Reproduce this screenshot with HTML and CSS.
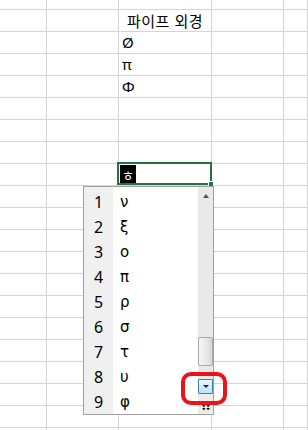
FILE: index.html
```html
<!DOCTYPE html>
<html lang="ko">
<head>
  <meta charset="UTF-8" />
  <meta name="viewport" content="width=device-width, initial-scale=1" />
  <title>파이프 외경</title>
  <link rel="stylesheet" href="styles.css">
</head>
<body>
  <div class="sheet" id="sheet"></div>

  <!-- IME candidate window -->
  <div class="ime">
    <div class="cand-list">
      <div class="cand"><span class="num">1</span><span class="ch">ν</span></div>
      <div class="cand"><span class="num">2</span><span class="ch">ξ</span></div>
      <div class="cand"><span class="num">3</span><span class="ch">ο</span></div>
      <div class="cand"><span class="num">4</span><span class="ch">π</span></div>
      <div class="cand"><span class="num">5</span><span class="ch">ρ</span></div>
      <div class="cand"><span class="num">6</span><span class="ch">σ</span></div>
      <div class="cand"><span class="num">7</span><span class="ch">τ</span></div>
      <div class="cand"><span class="num">8</span><span class="ch">υ</span></div>
      <div class="cand"><span class="num">9</span><span class="ch">φ</span></div>
    </div>
    <div class="scroll">
      <div class="sb-up"><span class="tri-up"></span></div>
      <div class="sb-space top"></div>
      <div class="sb-thumb"></div>
      <div class="sb-space bottom"></div>
      <div class="sb-down"><span class="tri-down"></span></div>
      <div class="sb-more">
        <svg width="8" height="6" viewBox="0 0 8 6">
          <path d="M0 0 L2 2.5 L3.5 0 Z M4.5 0 L6 2.5 L8 0 Z M0 3 L2 5.5 L3.5 3 Z M4.5 3 L6 5.5 L8 3 Z" fill="#111"/>
        </svg>
      </div>
    </div>
  </div>

  <!-- red annotation around the down button -->
  <div class="mark"></div>

  <script>
    // cell contents keyed by "row,col"
    const cells = {
      "1,2": { text: "파이프 외경", cls: "center" },
      "2,2": { text: "Ø" },
      "3,2": { text: "π" },
      "4,2": { text: "Φ" }
    };
    const activeRow = 8, activeCol = 2;
    const sheet = document.getElementById("sheet");

    for (let r = 0; r < 21; r++) {
      for (let c = 0; c < 5; c++) {
        const cell = document.createElement("div");
        cell.className = "cell";
        const data = cells[r + "," + c];
        if (data) {
          cell.textContent = data.text;
          if (data.cls) cell.classList.add(data.cls);
        }
        if (r === activeRow && c === activeCol) {
          cell.classList.add("active");
          cell.innerHTML = '<span class="compose">ㅎ</span><span class="handle"></span>';
        }
        sheet.appendChild(cell);
      }
    }
  </script>
</body>
</html>
```

FILE: styles.css
```css
body { margin: 0; background: #fff; overflow: hidden; font-family: "Noto Sans", "Noto Sans CJK KR", sans-serif; }

.sheet { display: grid; grid-template-columns: 47px 72px 93px 72px 1fr; grid-template-rows: 10px repeat(20, 22px); }
.cell { box-sizing: border-box; border-right: 1px solid #d4d4d4; border-bottom: 1px solid #d4d4d4; padding: 0 3px; font-size: 15px; line-height: 21px; color: #000; white-space: nowrap; overflow: visible; }
.cell.center { text-align: center; font-family: "Noto Sans CJK KR", sans-serif; font-size: 15px; letter-spacing: 0.5px; }

.cell.active { position: relative; padding: 1px 0 0 1px; }
.cell.active::after { content: ""; position: absolute; left: -2px; top: -2px; right: -1px; bottom: 0; border: 2px solid #217346; }
.compose { display: block; width: 16px; height: 19px; background: #000; color: #fff; font-family: "Noto Sans CJK KR", sans-serif; font-size: 13px; line-height: 19px; text-align: center; }
.handle { position: absolute; right: -3px; bottom: -2px; width: 4px; height: 4px; background: #217346; border: 1px solid #fff; z-index: 1; }

.ime { position: absolute; left: 83px; top: 186px; display: flex; border: 1px solid #a0a0a0; background: #fff; z-index: 2; }
.cand-list { width: 114px; padding-top: 2px; background: linear-gradient(to right, #f0f0f0 29px, #fff 29px); }
.cand { display: flex; height: 25px; align-items: center; font-size: 16px; color: #000; }
.num { width: 29px; text-align: center; }
.ch { padding-left: 7px; font-family: "DejaVu Sans", sans-serif; font-size: 15px; }

.scroll { width: 15px; display: flex; flex-direction: column; background: #e9e9e9; }
.sb-up { height: 18px; display: flex; justify-content: center; align-items: center; }
.tri-up { width: 0; height: 0; border-left: 3px solid transparent; border-right: 3px solid transparent; border-bottom: 4px solid #555; margin-left: 1px; }
.sb-space.top { height: 132px; }
.sb-space.bottom { height: 13px; }
.sb-thumb { box-sizing: border-box; height: 29px; width: 15px; border: 1px solid #a9a9a9; border-radius: 2px; background: linear-gradient(to right, #f6f6f6, #e6e6e6 60%, #d6d6d6); }
.sb-down { box-sizing: border-box; height: 15px; width: 15px; border: 1px solid #3c7fb1; border-radius: 1px; background: linear-gradient(#eaf6fd, #bfe3f7); display: flex; justify-content: center; align-items: center; }
.tri-down { width: 0; height: 0; border-left: 3px solid transparent; border-right: 3px solid transparent; border-top: 3px solid #1c2a38; }
.sb-more { flex: 1; display: flex; justify-content: center; align-items: flex-end; padding-bottom: 3px; background: #ececec; }

.mark { position: absolute; left: 181px; top: 372px; width: 38px; height: 25px; border: 4px solid #e8141c; border-radius: 10px; z-index: 3; }
```
